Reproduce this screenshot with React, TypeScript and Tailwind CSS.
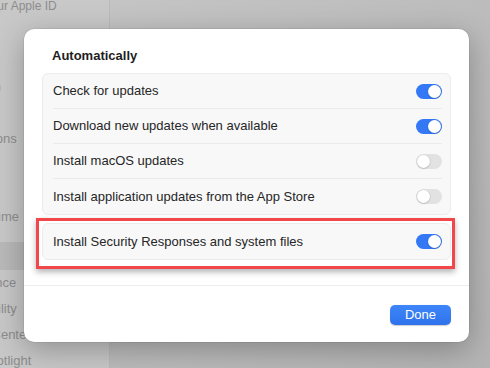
import React from "react";

type Row = { label: string; on: boolean };

const rows: Row[] = [
  { label: "Check for updates", on: true },
  { label: "Download new updates when available", on: true },
  { label: "Install macOS updates", on: false },
  { label: "Install application updates from the App Store", on: false },
];

const sidebarItems = [
  "Wi-Fi",
  "Bluetooth",
  "Network",
  "Notifications",
  "Sound",
  "Focus",
  "Screen Time",
];

const sidebarLower = ["Appearance", "Accessibility", "Control Center", "Siri & Spotlight"];

function Toggle({ on }: { on: boolean }) {
  return (
    <div
      className={
        on
          ? "flex h-[15px] w-[26px] items-center justify-end rounded-full bg-[#3478f6] px-px"
          : "flex h-[15px] w-[26px] items-center justify-start rounded-full bg-[#e2e2e2] px-px"
      }
    >
      <div className="h-[13px] w-[13px] rounded-full bg-white shadow-[0_0.5px_1.5px_rgba(0,0,0,0.3)]" />
    </div>
  );
}

function SettingRow({ label, on, last }: Row & { last?: boolean }) {
  return (
    <div className="pl-[10px] pr-[8px]">
      <div
        className={
          last
            ? "flex h-[35px] items-center justify-between"
            : "flex h-[35px] items-center justify-between border-b border-[#ebebeb]"
        }
      >
        <span className="text-[13px] text-[#262626]">{label}</span>
        <Toggle on={on} />
      </div>
    </div>
  );
}

export default function App() {
  return (
    <div
      className="relative flex h-[368px] w-[490px] overflow-hidden bg-[#c1c1c1]"
      style={{ fontFamily: "'Liberation Sans', Arial, sans-serif" }}
    >
      {/* dimmed settings window behind the sheet */}
      <aside className="w-[110px] shrink-0 overflow-hidden border-r border-[#bababa] bg-[#c8c8c8] text-[13px] text-[#8d8d8d]">
        <div className="-mt-[1px] h-[14px] whitespace-nowrap text-[12px] leading-[14px]">
          <span className="-ml-[40px] inline-block">with your Apple ID</span>
        </div>
        <div className="h-[35px]" />
        <div className="-ml-[54px]">
          {sidebarItems.map((s) => (
            <div key={s} className="flex h-[26px] items-center whitespace-nowrap">
              {s}
            </div>
          ))}
          <div className="h-[12px]" />
          <div className="-mr-[2px] flex h-[28px] items-center whitespace-nowrap bg-[#b9b9b9] pl-[54px]">
            <span className="-ml-[54px]">General</span>
          </div>
          {sidebarLower.map((s) => (
            <div key={s} className="flex h-[26px] items-center whitespace-nowrap">
              {s}
            </div>
          ))}
        </div>
      </aside>
      <main className="flex-1 bg-gradient-to-br from-[#c4c4c4] to-[#b4b4b4]" />

      {/* sheet */}
      <div className="absolute left-[24px] top-[29px] flex h-[313px] w-[445px] flex-col rounded-[10px] bg-white shadow-[0_8px_30px_rgba(0,0,0,0.28),0_0_0_0.5px_rgba(0,0,0,0.12)]">
        <div className="px-[18px] pt-[19px]">
          <h2 className="ml-[10px] h-[16px] text-[13px] font-bold leading-[16px] text-[#1e1e1e]">
            Automatically
          </h2>
          <div className="mt-[9px] overflow-hidden rounded-[6px] border border-[#ececec] bg-[#f8f8f8]">
            {rows.map((r, i) => (
              <SettingRow key={r.label} {...r} last={i === rows.length - 1} />
            ))}
          </div>
          <div className="relative mt-[8px]">
            <div className="rounded-[6px] border border-[#ececec] bg-[#f8f8f8]">
              <SettingRow label="Install Security Responses and system files" on last />
            </div>
            <div className="pointer-events-none absolute -bottom-[9px] -left-[6px] -right-[4px] -top-[5px] border-[3px] border-[#f2474a] shadow-[0_3px_6px_rgba(0,0,0,0.3)]" />
          </div>
        </div>
        <div className="mt-[25px] border-t border-[#ededed]" />
        <div className="flex flex-1 items-start justify-end px-[18px] pt-[19px]">
          <button className="h-[20px] w-[61px] rounded-[5px] bg-gradient-to-b from-[#3d86f8] to-[#2f72ec] text-[13px] font-medium leading-[20px] text-white shadow-[0_0.5px_1px_rgba(0,0,0,0.2)]">
            Done
          </button>
        </div>
      </div>
    </div>
  );
}
